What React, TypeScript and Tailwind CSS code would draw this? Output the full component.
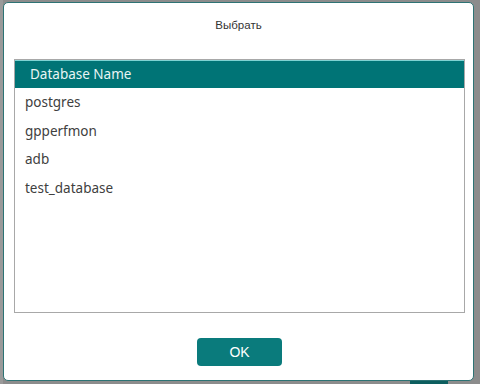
const rows = ["postgres", "gpperfmon", "adb", "test_database"];

const App = () => {
  return (
    <div className="relative w-[480px] h-[384px] overflow-hidden bg-[#8c8c8c] pl-[3px] pt-[2px]">
      {/* bits of the page behind the modal */}
      <div className="absolute left-0 top-0 w-[3px] h-full bg-[#9a9a9a]" />
      <div className="absolute left-[410px] top-[381px] w-[38px] h-[6px] bg-[#0d5e5f]" />

      <div className="relative flex flex-col w-[471px] h-[379px] bg-white border border-[#2d7374] rounded-[5px]">
        <div className="h-[56px] pt-[14px] text-center text-[11.5px] text-[#333] font-['Liberation_Sans',sans-serif]">
          Выбрать
        </div>
        <div className="ml-[10px] mr-[8px] h-[254px] border border-[#a8a8a8] font-['Noto_Sans',sans-serif]">
          <div className="h-[28px] bg-[#007476] border-t border-[#7fd3d3] pl-[15px] flex items-center text-[13.5px] text-[#e8f4f4]">
            Database Name
          </div>
          {rows.map((name) => (
            <div key={name} className="h-[28.5px] pl-[10px] flex items-center text-[13.5px] text-[#404040]">
              {name}
            </div>
          ))}
        </div>
        <div className="flex justify-center pt-[25px] pl-[2px]">
          <button className="w-[85px] h-[28px] rounded-[4px] bg-[#0a7b7c] text-white text-[14px] font-['Liberation_Sans',sans-serif]">
            OK
          </button>
        </div>
      </div>
    </div>
  );
};

export default App;
